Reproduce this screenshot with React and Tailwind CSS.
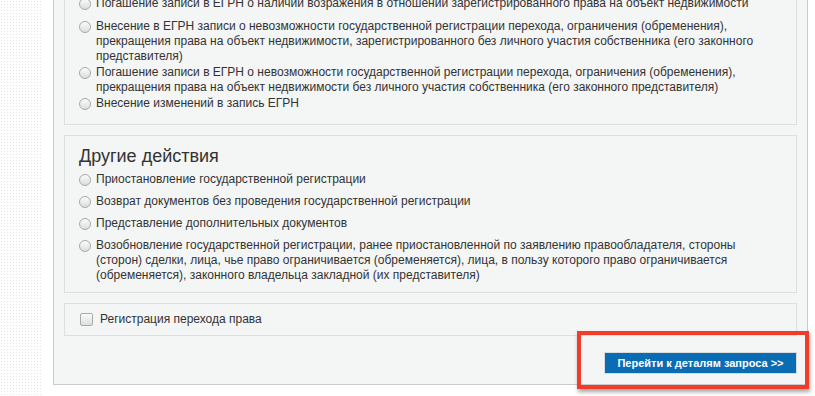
import React from "react";

const Radio = () => (
  <span className="mt-[1.5px] mr-[5px] inline-block h-[12px] w-[12px] shrink-0 rounded-full border border-[#a8abab] bg-[linear-gradient(#fafafa,#dcdede)]"></span>
);

const Item = ({ children, className = "" }) => (
  <div className={"flex items-start " + className}>
    <Radio />
    <span>{children}</span>
  </div>
);

const App = () => {
  return (
    <div
      className="relative h-[396px] w-[815px] overflow-hidden bg-white text-[12px] leading-[15px] text-[#333]"
      style={{ fontFamily: '"Liberation Sans", Arial, sans-serif' }}
    >
      <div className="flex h-full">
        {/* textured page background on the left */}
        <div className="h-full w-[43px] shrink-0 bg-[radial-gradient(#e4e4e4_0.6px,transparent_0.8px)] bg-[length:3px_3px]"></div>
        <div className="w-[10px] shrink-0"></div>

        <div className="-mt-[15px] w-[755px] shrink-0 self-start border border-[#c9cbcb] bg-[#f4f5f5] px-[10px] pb-[10px]">
          <div className="border border-t-0 border-[#dcdfdf] pt-[10px] pr-[14px] pb-[13px] pl-[14px]">
            <Item className="mb-[8px]">
              Погашение записи в ЕГРН о наличии возражения в отношении зарегистрированного права на объект недвижимости
            </Item>
            <Item className="mb-[1px]">
              Внесение в ЕГРН записи о невозможности государственной регистрации перехода, ограничения (обременения),
              прекращения права на объект недвижимости, зарегистрированного без личного участия собственника (его законного
              представителя)
            </Item>
            <Item className="mb-[1px]">
              Погашение записи в ЕГРН о невозможности государственной регистрации перехода, ограничения (обременения),
              прекращения права на объект недвижимости без личного участия собственника (его законного представителя)
            </Item>
            <Item>Внесение изменений в запись ЕГРН</Item>
          </div>

          <div className="mt-[10px] border border-[#dcdfdf] pt-[10px] pr-[14px] pb-[9px] pl-[14px]">
            <h2 className="mb-[5px] text-[18px] leading-[21px] font-normal text-[#333]">Другие действия</h2>
            <Item className="mb-[7px]">Приостановление государственной регистрации</Item>
            <Item className="mb-[7px]">Возврат документов без проведения государственной регистрации</Item>
            <Item className="mb-[7px]">Представление дополнительных документов</Item>
            <Item>
              Возобновление государственной регистрации, ранее приостановленной по заявлению правообладателя, стороны
              (сторон) сделки, лица, чье право ограничивается (обременяется), лица, в пользу которого право ограничивается
              (обременяется), законного владельца закладной (их представителя)
            </Item>
          </div>

          <div className="mt-[10px] flex h-[33px] items-center border border-[#dcdfdf] pl-[15px]">
            <span className="mr-[7px] inline-block h-[13px] w-[13px] rounded-[2px] border border-[#a8abab] bg-[linear-gradient(#fafafa,#dcdede)]"></span>
            <span>Регистрация перехода права</span>
          </div>

          <div className="mt-[16px] flex justify-end">
            <button className="h-[22px] w-[193px] border border-[#d6dcdf] bg-[#0a6db3] text-[11px] font-bold text-white">
              Перейти к деталям запроса &gt;&gt;
            </button>
          </div>
        </div>
      </div>

      {/* red annotation frame */}
      <div className="absolute top-[331px] left-[577px] h-[58px] w-[232px] border-[4px] border-[#f23b28] shadow-[1px_3px_4px_rgba(0,0,0,0.35)]"></div>
    </div>
  );
};

export default App;
